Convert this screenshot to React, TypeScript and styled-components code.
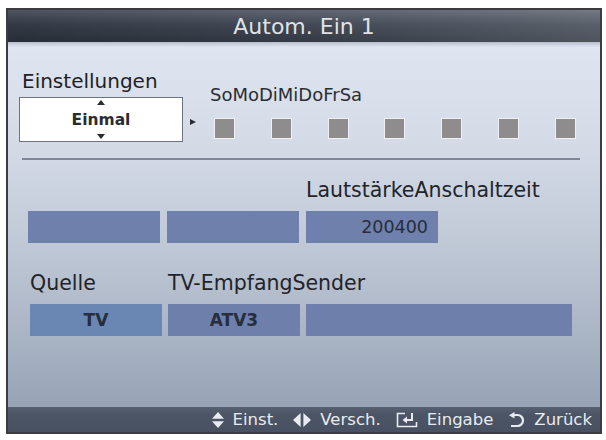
import React from "react";
import styled, { createGlobalStyle } from "styled-components";

const GlobalStyle = createGlobalStyle`
  html, body { margin: 0; padding: 0; background: #ffffff; }
  body { font-family: "DejaVu Sans", "Liberation Sans", sans-serif; }
`;

const Frame = styled.div`
  box-sizing: border-box;
  margin: 8px 0 0 6px;
  width: 596px;
  height: 426px;
  border: 2px solid #3a3c41;
  display: flex;
  flex-direction: column;
  overflow: hidden;
`;

const TitleBar = styled.div`
  height: 32px;
  flex: none;
  display: flex;
  align-items: center;
  justify-content: center;
  color: #dfe2e7;
  font-size: 22px;
  background:
    linear-gradient(90deg, rgba(0,0,0,0.12) 0%, rgba(255,255,255,0.04) 50%, rgba(255,255,255,0.16) 100%),
    linear-gradient(180deg, #59606c 0%, #3b424e 45%, #2c323d 100%);
`;

const Body = styled.div`
  flex: 1;
  display: flex;
  flex-direction: column;
  padding-top: 27px;
  background:
    linear-gradient(180deg, rgba(40,50,70,0.22) 0px, rgba(40,50,70,0) 5px),
    linear-gradient(180deg, #dfe6f1 0%, #d3dae6 30%, #bcc5d3 60%, #a5b0c1 85%, #97a3b5 100%);
`;

const TopRow = styled.div`
  display: flex;
  align-items: flex-start;
  padding-left: 11px;
`;

const LeftCol = styled.div`
  display: flex;
  flex-direction: column;
  width: 164px;
`;

const SettingLabel = styled.div`
  font-size: 20px;
  line-height: 24px;
  padding-left: 3px;
  color: #1f2126;
  white-space: nowrap;
`;

const ValueBox = styled.div`
  box-sizing: border-box;
  margin-top: 4px;
  height: 45px;
  border: 1.5px solid #6d7381;
  background: #ffffff;
  display: flex;
  flex-direction: column;
  align-items: center;
  justify-content: space-between;
  padding: 2px 0 2px;
`;

const ValueText = styled.span`
  font-size: 15.5px;
  font-weight: bold;
  color: #2a2c30;
  line-height: 18px;
`;

const Tri = styled.span<{ $dir: "up" | "down" }>`
  width: 0;
  height: 0;
  border-left: 4px solid transparent;
  border-right: 4px solid transparent;
  ${(p) =>
    p.$dir === "up"
      ? "border-bottom: 5px solid #2a2c31;"
      : "border-top: 5px solid #2a2c31;"}
`;

const RightArrow = styled.span`
  margin: 50px 0 0 7px;
  width: 0;
  height: 0;
  border-top: 3.5px solid transparent;
  border-bottom: 3.5px solid transparent;
  border-left: 6px solid #2a2c31;
`;

const RightCol = styled.div`
  margin: 15px 0 0 14px;
  display: flex;
  flex-direction: column;
`;

const DaysLabel = styled.div`
  font-size: 18px;
  line-height: 22px;
  color: #2b2d33;
  white-space: nowrap;
`;

const Squares = styled.div`
  margin: 12px 0 0 4px;
  width: 362px;
  display: flex;
  justify-content: space-between;
`;

const Square = styled.span`
  box-sizing: border-box;
  width: 21px;
  height: 21px;
  background: #8e8c8c;
  border: 1px solid #eef0f4;
`;

const Divider = styled.div`
  margin: 16px 0 0 14px;
  width: 558px;
  height: 2px;
  background: #7f8797;
`;

const FieldGrid = styled.div<{ $cols: string; $gap: number; $top: number; $left: number }>`
  display: grid;
  grid-template-columns: ${(p) => p.$cols};
  grid-template-rows: 24px 32px;
  column-gap: ${(p) => p.$gap}px;
  row-gap: 9px;
  margin-top: ${(p) => p.$top}px;
  padding-left: ${(p) => p.$left}px;
`;

const FieldLabel = styled.div<{ $col: number }>`
  grid-row: 1;
  grid-column: ${(p) => p.$col} / span 1;
  font-size: 20.5px;
  line-height: 24px;
  color: #222429;
  white-space: nowrap;
`;

const Cell = styled.div<{ $bg: string; $align: "center" | "flex-end" }>`
  grid-row: 2;
  box-sizing: border-box;
  height: 32px;
  background: ${(p) => p.$bg};
  display: flex;
  align-items: center;
  justify-content: ${(p) => p.$align};
  padding-right: ${(p) => (p.$align === "flex-end" ? "10px" : "0")};
  color: #262d3b;
`;

const CellText = styled.span<{ $bold?: boolean }>`
  font-size: ${(p) => (p.$bold ? "17px" : "17.5px")};
  font-weight: ${(p) => (p.$bold ? "bold" : "normal")};
`;

const Footer = styled.div`
  height: 25px;
  flex: none;
  display: flex;
  align-items: center;
  justify-content: flex-end;
  gap: 15px;
  padding-right: 8px;
  color: #e8ebef;
  font-size: 16.5px;
  background: linear-gradient(180deg, #566070 0%, #4b5565 30%, #475161 100%);
`;

const FooterItem = styled.div`
  display: flex;
  align-items: center;
  gap: 9px;
  white-space: nowrap;
`;

const ICON = "#e8ebef";

const UpDownIcon = () => (
  <svg width="12" height="16" viewBox="0 0 12 16">
    <polygon points="6,0 12,6.8 0,6.8" fill={ICON} />
    <polygon points="0,9.2 12,9.2 6,16" fill={ICON} />
  </svg>
);

const LeftRightIcon = () => (
  <svg width="18" height="14" viewBox="0 0 18 14">
    <polygon points="0,7 7.6,0 7.6,14" fill={ICON} />
    <polygon points="10.4,0 18,7 10.4,14" fill={ICON} />
  </svg>
);

const EnterIcon = () => (
  <svg width="22" height="16" viewBox="0 0 22 16">
    <path d="M9 1.5 H1.5 V14.5 H20.5 V10" fill="none" stroke={ICON} strokeWidth="1.6" />
    <path d="M16 1 V8 H10" fill="none" stroke={ICON} strokeWidth="2" />
    <polygon points="6.5,8 11,4.5 11,11.5" fill={ICON} />
  </svg>
);

const ReturnIcon = () => (
  <svg width="17" height="16" viewBox="0 0 17 16">
    <path d="M5 3 H9.5 A5.5 5.5 0 0 1 9.5 14 H3" fill="none" stroke={ICON} strokeWidth="2.2" />
    <polygon points="1,3.2 6.5,0 6.5,6.4" fill={ICON} />
  </svg>
);

const ROW2 = "#6f80ac";
const ROW3A = "#6a86b2";
const ROW3B = "#6e7fab";

export default function App() {
  return (
    <>
      <GlobalStyle />
      <Frame>
        <TitleBar>Autom. Ein 1</TitleBar>
        <Body>
          <TopRow>
            <LeftCol>
              <SettingLabel>Einstellungen</SettingLabel>
              <ValueBox>
                <Tri $dir="up" />
                <ValueText>Einmal</ValueText>
                <Tri $dir="down" />
              </ValueBox>
            </LeftCol>
            <RightArrow />
            <RightCol>
              <DaysLabel>SoMoDiMiDoFrSa</DaysLabel>
              <Squares>
                {Array.from({ length: 7 }).map((_, i) => (
                  <Square key={i} />
                ))}
              </Squares>
            </RightCol>
          </TopRow>
          <Divider />
          <FieldGrid $cols="132px 132px 132px" $gap={7} $top={18} $left={20}>
            <FieldLabel $col={3}>LautstärkeAnschaltzeit</FieldLabel>
            <Cell $bg={ROW2} $align="center" />
            <Cell $bg={ROW2} $align="center" />
            <Cell $bg={ROW2} $align="flex-end">
              <CellText>200400</CellText>
            </Cell>
          </FieldGrid>
          <FieldGrid $cols="132px 132px 266px" $gap={6} $top={28} $left={22}>
            <FieldLabel $col={1}>Quelle</FieldLabel>
            <FieldLabel $col={2}>TV-EmpfangSender</FieldLabel>
            <Cell $bg={ROW3A} $align="center">
              <CellText $bold>TV</CellText>
            </Cell>
            <Cell $bg={ROW3B} $align="center">
              <CellText $bold>ATV3</CellText>
            </Cell>
            <Cell $bg={ROW3B} $align="center" />
          </FieldGrid>
        </Body>
        <Footer>
          <FooterItem>
            <UpDownIcon />
            <span>Einst.</span>
          </FooterItem>
          <FooterItem>
            <LeftRightIcon />
            <span>Versch.</span>
          </FooterItem>
          <FooterItem>
            <EnterIcon />
            <span>Eingabe</span>
          </FooterItem>
          <FooterItem>
            <ReturnIcon />
            <span>Zurück</span>
          </FooterItem>
        </Footer>
      </Frame>
    </>
  );
}
